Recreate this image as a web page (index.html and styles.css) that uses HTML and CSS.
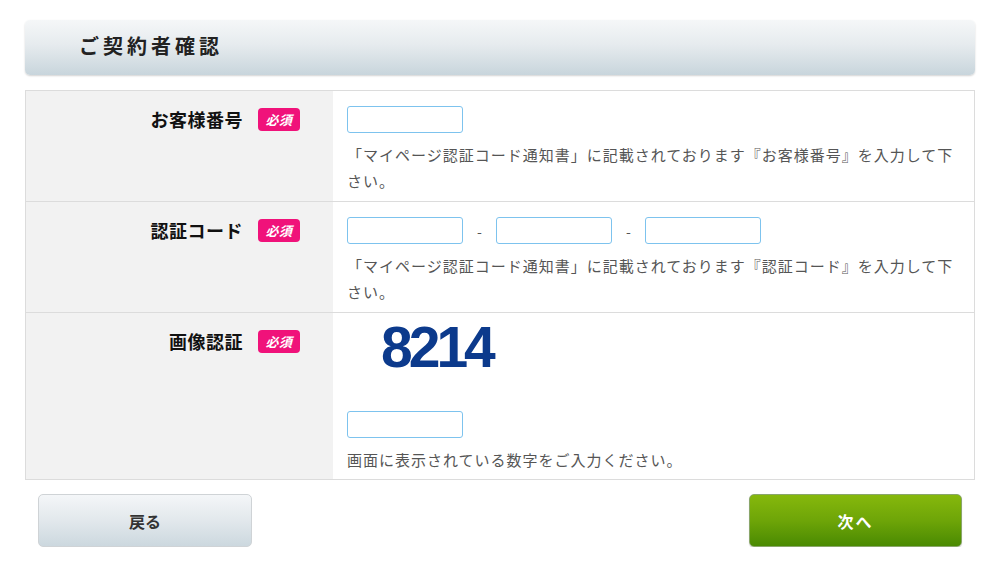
FILE: index.html
```html
<!DOCTYPE html>
<html lang="ja">
<head>
<meta charset="utf-8">
<title>ご契約者確認</title>
<link rel="stylesheet" href="styles.css">
</head>
<body>
<div class="page">
  <div class="heading"><h1>ご契約者確認</h1></div>

  <div class="form">
    <div class="row">
      <div class="label"><span class="label-text">お客様番号</span><span class="badge">必須</span></div>
      <div class="field">
        <div class="inputs"><input class="box" type="text"></div>
        <p class="note">「マイページ認証コード通知書」に記載されております『お客様番号』を入力して下さい。</p>
      </div>
    </div>
    <div class="row">
      <div class="label"><span class="label-text">認証コード</span><span class="badge">必須</span></div>
      <div class="field">
        <div class="inputs"><input class="box" type="text"><span class="dash">-</span><input class="box" type="text"><span class="dash">-</span><input class="box" type="text"></div>
        <p class="note">「マイページ認証コード通知書」に記載されております『認証コード』を入力して下さい。</p>
      </div>
    </div>
    <div class="row row-captcha">
      <div class="label"><span class="label-text">画像認証</span><span class="badge">必須</span></div>
      <div class="field">
        <div class="captcha">8214</div>
        <div class="inputs"><input class="box" type="text"></div>
        <p class="note">画面に表示されている数字をご入力ください。</p>
      </div>
    </div>
  </div>

  <div class="actions">
    <button class="btn btn-back" type="button">戻る</button>
    <button class="btn btn-next" type="button">次へ</button>
  </div>
</div>
</body>
</html>
```

FILE: styles.css
```css
* { box-sizing: border-box; }
html, body { margin: 0; padding: 0; background: #fff; }
body {
  font-family: "Noto Sans CJK JP", "Noto Sans", sans-serif;
  color: #333;
}
.page {
  width: 950px;
  margin-left: 25px;
  padding-top: 20px;
}
.heading {
  height: 55px;
  border-radius: 5px;
  background: linear-gradient(to bottom, #f5f7f8 0%, #e6ebee 45%, #c8d5dc 100%);
  box-shadow: 0 1px 2px rgba(0,0,0,0.18);
  display: flex;
  align-items: center;
  padding-left: 54px;
}
.heading h1 {
  margin: 0;
  font-size: 20px;
  font-weight: bold;
  letter-spacing: 4px;
  color: #222;
  line-height: 1;
  padding-bottom: 4px;
}
.form {
  margin-top: 15px;
  border: 1px solid #dcdcdc;
}
.row {
  display: grid;
  grid-template-columns: 307px 1fr;
  height: 111px;
  border-top: 1px solid #dcdcdc;
}
.row:first-child { border-top: 0; height: 110px; }
.row-captcha { height: 167px; }
.label {
  background: #f2f2f2;
  display: flex;
  justify-content: flex-end;
  align-items: flex-start;
  gap: 15px;
  padding: 17px 33px 0 0;
}
.label-text {
  font-size: 18px;
  font-weight: bold;
  color: #111;
  line-height: 23px;
  letter-spacing: 0.5px;
}
.badge {
  width: 42px;
  height: 23px;
  border-radius: 4px;
  background: #f0127a;
  color: #fff;
  font-size: 13px;
  font-weight: bold;
  font-style: italic;
  line-height: 23px;
  text-align: center;
  letter-spacing: 0.5px;
}
.field {
  padding: 15px 15px 0 14px;
}
.inputs {
  display: flex;
  align-items: center;
}
.box {
  width: 116px;
  height: 27px;
  border: 1px solid #7dc3ee;
  border-radius: 3px;
  background: #fff;
  padding: 0 4px;
  margin: 0;
  font-size: 14px;
}
.dash {
  width: 33px;
  text-align: center;
  font-size: 14px;
  color: #555;
}
.note {
  margin: 9px 0 0;
  font-size: 15px;
  letter-spacing: 1px;
  line-height: 26px;
  color: #555;
}
.captcha {
  margin-top: -11px;
  height: 94px;
  padding-left: 34px;
  font-family: "Liberation Sans", Arial, sans-serif;
  font-weight: bold;
  font-size: 57px;
  letter-spacing: -4px;
  line-height: 60px;
  color: #0c3a8c;
}
.actions {
  display: flex;
  justify-content: space-between;
  padding: 14px 13px 0 13px;
}
.btn {
  width: 214px;
  height: 53px;
  border-radius: 5px;
  font-family: "Noto Sans CJK JP", "Noto Sans", sans-serif;
  font-size: 16px;
  font-weight: bold;
  cursor: pointer;
  padding: 0;
}
.btn-back {
  border: 1px solid #cfd3d6;
  background: linear-gradient(to bottom, #f4f6f8 0%, #e2e8ec 50%, #ccd8df 100%);
  color: #333;
}
.btn-next {
  width: 213px;
  border: 1px solid #8aa66a;
  background: linear-gradient(to bottom, #86b80c 0%, #6ea508 50%, #4a8a02 100%);
  color: #fff;
  letter-spacing: 2px;
  box-shadow: 0 1px 1px rgba(0,0,0,0.2);
}
```
